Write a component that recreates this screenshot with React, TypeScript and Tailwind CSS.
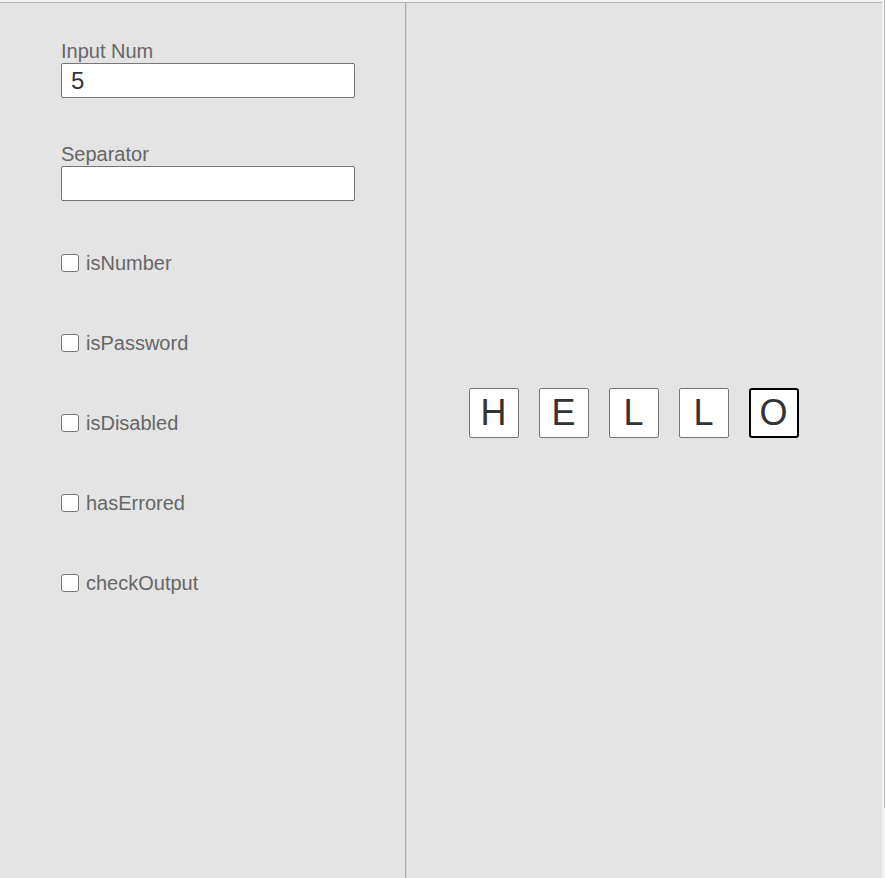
import { useState } from 'react';

const font = { fontFamily: '"Liberation Sans", Arial, sans-serif' };

const flags = ['isNumber', 'isPassword', 'isDisabled', 'hasErrored', 'checkOutput'];
const letters = ['H', 'E', 'L', 'L', 'O'];

function Field({ label, value }: { label: string; value: string }) {
  return (
    <div className="flex flex-col">
      <label className="text-[20px] leading-[23px] text-[#666]">{label}</label>
      <input
        readOnly
        value={value}
        className="w-[294px] h-[35px] bg-white border border-[#767676] rounded-[2px] pl-[9px] text-[24px] text-[#333] outline-none"
      />
    </div>
  );
}

export default function App() {
  const [checked, setChecked] = useState<Record<string, boolean>>({});

  return (
    <div className="flex w-[885px] h-[878px] bg-[#f1f1f1] overflow-hidden" style={font}>
      <div className="flex flex-col w-[882px] pt-[2px]">
        <div className="flex flex-1 bg-[#e4e4e4] border-t border-[#b5b5b5]">
          {/* settings */}
          <div className="w-[406px] border-r border-[#a8a8a8] pl-[61px] pt-[37px] flex flex-col">
            <Field label="Input Num" value="5" />
            <div className="mt-[45px]">
              <Field label="Separator" value="" />
            </div>
            <div className="flex flex-col gap-[57px] mt-[50px]">
              {flags.map((f) => (
                <label key={f} className="flex items-center h-[23px] gap-[7px] text-[20px] text-[#666]">
                  <input
                    type="checkbox"
                    checked={!!checked[f]}
                    onChange={() => setChecked({ ...checked, [f]: !checked[f] })}
                    className="appearance-none shrink-0 w-[18px] h-[18px] bg-white border border-[#767676] rounded-[3px]"
                  />
                  {f}
                </label>
              ))}
            </div>
          </div>

          {/* otp preview */}
          <div className="flex-1 flex justify-center items-start pt-[385px] pr-[2px] border-l border-[#d4d4d4]">
            {letters.map((l, i) => (
              <div
                key={i}
                className={`mr-[20px] w-[50px] h-[50px] bg-white flex items-center justify-center text-[36px] text-[#333] ${
                  i === 4 ? 'border-2 border-black rounded-[3px]' : 'border border-[#767676] rounded-[2px]'
                }`}
              >
                {l}
              </div>
            ))}
          </div>
        </div>
      </div>
      <div className="w-[3px] flex justify-end">
        <div className="w-[1px] h-[808px] bg-[#bdbdbd]" />
      </div>
    </div>
  );
}
